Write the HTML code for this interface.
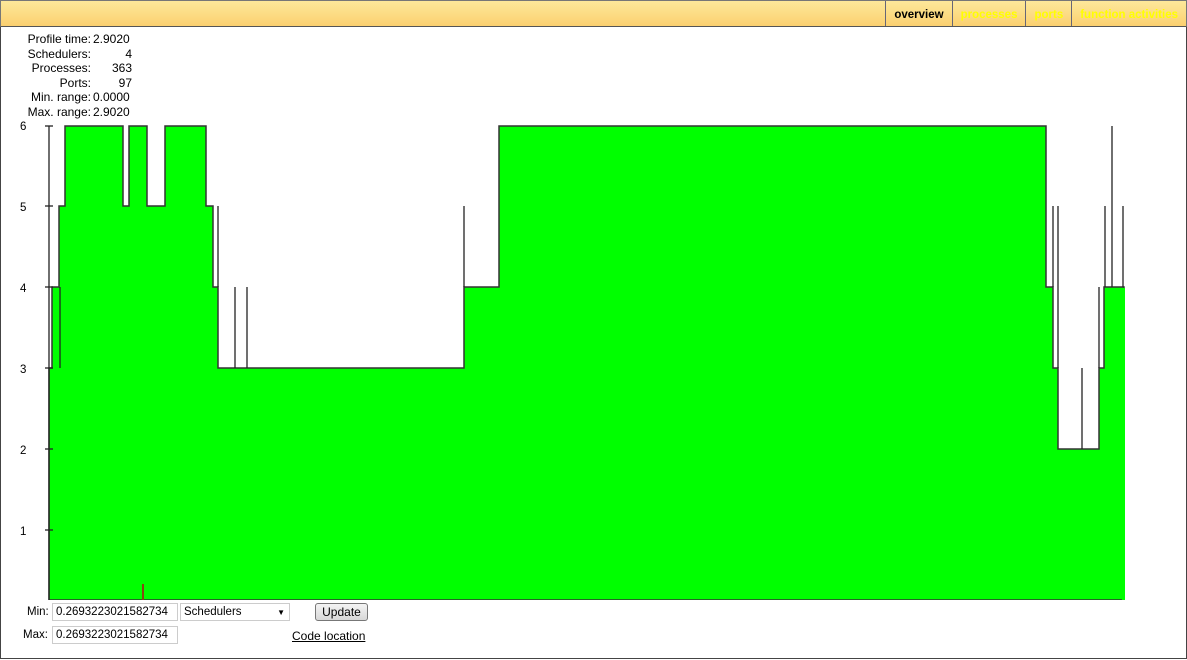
<!DOCTYPE html>
<html><head><style>
body{margin:0;width:1187px;height:660px;overflow:hidden;font-family:"Liberation Sans",sans-serif;font-size:11px;background:#fff}
#wrap{position:absolute;left:0;top:0;width:1185px;height:658px;border:1px solid #444;border-top:none}
#hdr{position:absolute;left:0;top:0;width:1187px;height:27px;background:linear-gradient(#fde89a,#fbd070);border:1px solid #777;border-bottom:1px solid #555;box-sizing:border-box}
#tabs{position:absolute;right:0;top:0;height:25px;display:flex}
#tabs div{border-left:1px solid #667;padding:0 8px;line-height:28px;height:25px;font-weight:bold;color:#ff0;font-size:11.5px}
#tabs div.a{color:#000}
#info{position:absolute;left:21px;top:32px;line-height:14.6px;font-size:12px}
#info td{padding:0}
.l{text-align:right;width:70px}
.v{width:39px;padding-left:2px!important}
.r{text-align:right}
.ctl{position:absolute;font-size:11.5px}
.inp{position:absolute;border:1px solid #ccc;height:18px;line-height:17px;padding-left:3px;box-sizing:border-box;font-size:11.5px}
</style></head><body>
<div id="wrap"></div>
<div id="hdr"><div id="tabs"><div class="a">overview</div><div>processes</div><div>ports</div><div>function activities</div></div></div>
<table id="info" cellspacing="0" cellpadding="0">
<tr><td class="l">Profile time:</td><td class="v">2.9020</td></tr>
<tr><td class="l">Schedulers:</td><td class="v r">4</td></tr>
<tr><td class="l">Processes:</td><td class="v r">363</td></tr>
<tr><td class="l">Ports:</td><td class="v r">97</td></tr>
<tr><td class="l">Min. range:</td><td class="v">0.0000</td></tr>
<tr><td class="l">Max. range:</td><td class="v">2.9020</td></tr>
</table>
<svg style="position:absolute;left:0;top:0" width="1187" height="660">
<g font-size="11.5" font-family="Liberation Sans,sans-serif" fill="#000">
<text x="20" y="130">6</text><text x="20" y="211">5</text><text x="20" y="292">4</text><text x="20" y="373">3</text><text x="20" y="454">2</text><text x="20" y="535">1</text></g>
<path fill="#00ff00" stroke="#333" stroke-width="1.5" d="M49,600 L49,368 L52,368 L52,287 L59,287 L59,206 L65,206 L65,126 L123,126 L123,206 L129,206 L129,126 L147,126 L147,206 L165,206 L165,126 L206,126 L206,206 L213,206 L213,287 L218,287 L218,368 L464,368 L464,287 L499,287 L499,126 L1046,126 L1046,287 L1053,287 L1053,368 L1058,368 L1058,449 L1099,449 L1099,368 L1104,368 L1104,287 L1124,287 L1124,600 Z"/>
<rect x="1122" y="288" width="3" height="312" fill="#00ff00"/>
<rect x="40" y="600" width="1100" height="4" fill="#fff"/>
<g stroke="#222" stroke-width="1.3">
<line x1="49" y1="126" x2="49" y2="600"/>
<line x1="45" y1="126" x2="53" y2="126"/><line x1="45" y1="206" x2="53" y2="206"/><line x1="45" y1="287" x2="53" y2="287"/><line x1="45" y1="368" x2="53" y2="368"/><line x1="45" y1="449" x2="53" y2="449"/><line x1="45" y1="530" x2="53" y2="530"/>
<line x1="60" y1="287" x2="60" y2="368"/>
<line x1="218" y1="206" x2="218" y2="287"/>
<line x1="235" y1="287" x2="235" y2="368"/><line x1="247" y1="287" x2="247" y2="368"/>
<line x1="464" y1="206" x2="464" y2="287"/>
<line x1="1053" y1="206" x2="1053" y2="287"/><line x1="1058" y1="206" x2="1058" y2="368"/>
<line x1="1082" y1="368" x2="1082" y2="449"/>
<line x1="1099" y1="287" x2="1099" y2="368"/><line x1="1105" y1="206" x2="1105" y2="287"/>
<line x1="1112" y1="126" x2="1112" y2="287"/><line x1="1123" y1="206" x2="1123" y2="287"/>
</g>
<rect x="142" y="584" width="2" height="16" fill="#8b4513"/>
</svg>
<div class="ctl" style="left:27px;top:606px">Min:</div>
<div class="inp" style="left:52px;top:603px;width:126px">0.2693223021582734</div>
<div class="inp" style="left:180px;top:603px;width:110px">Schedulers<span style="position:absolute;right:4px;top:0;font-size:8px">▼</span></div>
<div style="position:absolute;left:315px;top:603px;width:53px;height:18px;border:1px solid #777;border-radius:3px;background:linear-gradient(#f4f4f4,#d8d8d8);text-align:center;line-height:17px;box-sizing:border-box;font-size:12px">Update</div>
<div class="ctl" style="left:23px;top:629px">Max:</div>
<div class="inp" style="left:52px;top:626px;width:126px">0.2693223021582734</div>
<div class="ctl" style="left:292px;top:629px;text-decoration:underline;font-size:12px">Code location</div>
</body></html>
